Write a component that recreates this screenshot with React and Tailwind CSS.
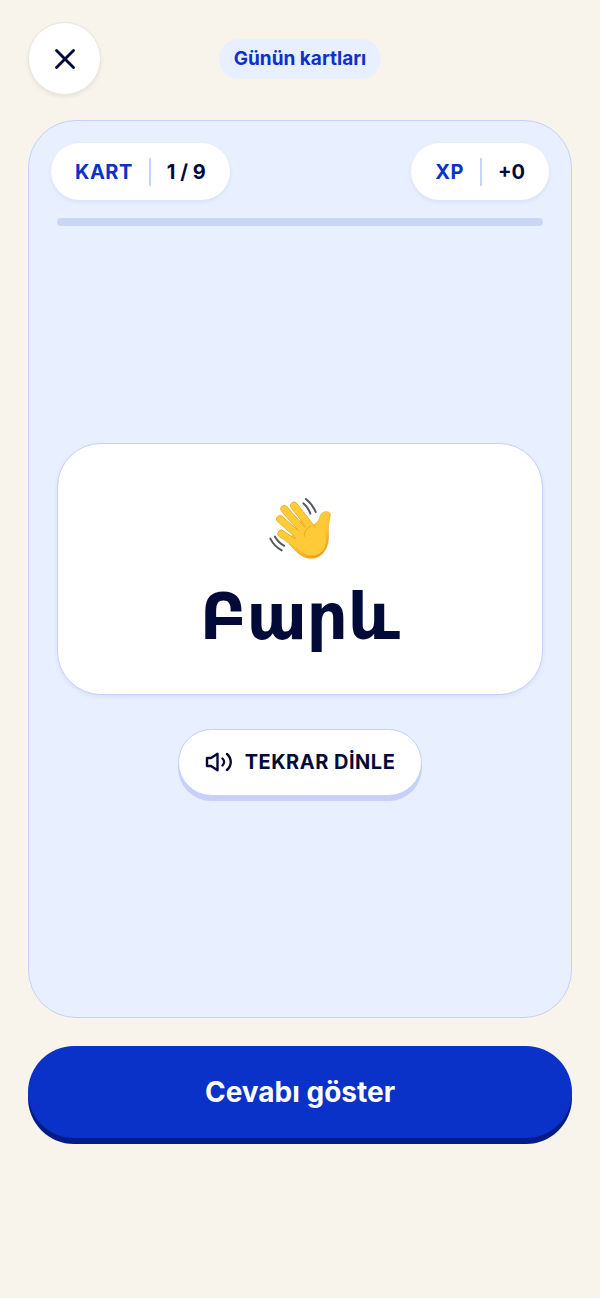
import { X } from 'lucide-react';

const FINGERS = [
  'M132 77 L186 146',
  'M103 87 L166 160',
  'M90 117 L154 174',
  'M94 161 L150 200',
];

const PALM =
  'M152 122 L180 136 C186 137 190 135 195 132 C204 127 207 119 211 107 C216 92 238 92 241 102 C240 116 233 134 235 158 C237 184 232 206 217 221 C204 234 187 237 170 233 C150 228 134 211 118 192 C124 170 134 146 152 122 Z';

const WavingHand = () => (
  <svg className="size-16" viewBox="54 51 192 192" fill="none" strokeLinecap="round" aria-hidden="true">
    <defs>
      <linearGradient id="skin" x1="90" y1="70" x2="190" y2="236" gradientUnits="userSpaceOnUse">
        <stop offset="0" stopColor="#ffd03d" />
        <stop offset="0.7" stopColor="#fdc834" />
        <stop offset="1" stopColor="#ee9c1b" />
      </linearGradient>
    </defs>
    <path d={PALM} fill="url(#skin)" stroke="#eba323" strokeWidth="2" />
    {FINGERS.map((d) => (
      <g key={d}>
        <path d={d} stroke="#e39b20" strokeWidth="23" />
        <path d={d} stroke="#ffcc38" strokeWidth="20" />
      </g>
    ))}
    <path
      d="M148 146 L182 137 C190 143 202 150 216 145 C228 155 231 184 224 203 C214 227 182 233 160 220 C146 212 138 202 132 193 L136 178 L142 162 Z"
      fill="#ffca37"
    />
    <path d="M183 138 C170 143 162 155 163 169" stroke="#eaa829" strokeWidth="3" />
    <path
      d="M160 70 C170 79 177 88 181 101 M168 57 C181 68 191 81 197 96 M61 176 C69 192 80 203 95 211 M75 170 C82 182 91 191 102 197"
      stroke="#555960"
      strokeWidth="6"
    />
  </svg>
);

const SpeakerIcon = () => (
  <svg
    className="h-5 w-7"
    viewBox="0 0 28 20"
    fill="none"
    stroke="currentColor"
    strokeWidth="2.4"
    strokeLinecap="round"
    strokeLinejoin="round"
    aria-hidden="true"
  >
    <path d="M2 6 H6 L12.5 1.8 V18.2 L6 14 H2 Z" />
    <path d="M17.5 6.5 C19.5 8.5 19.5 11.5 17.5 13.5" />
    <path d="M22 2 C27 6.5 27 13.5 22 18" />
  </svg>
);

const StatPill = ({ label, value }) => (
  <div className="flex h-[57px] items-center gap-4 rounded-full bg-white px-6 text-xl font-bold shadow-[0_2px_4px_rgba(20,40,130,0.07)]">
    <span className="tracking-wide text-[#0a32c8]">{label}</span>
    <span className="h-7 w-0.5 bg-[#c7d4fa]" />
    <span className="text-[#020b38]">{value}</span>
  </div>
);

const App = () => {
  return (
    <div className="flex min-h-screen flex-col bg-[#f8f4eb] px-7 pt-[22px] pb-[154px] font-['Inter','DejaVu_Sans',sans-serif] text-[#020b38]">
      <header className="grid grid-cols-[1fr_auto_1fr] items-center">
        <button
          type="button"
          aria-label="Kapat"
          className="flex size-[73px] items-center justify-center rounded-full border border-[#e9e6df] bg-white shadow-[0_2px_4px_rgba(0,0,0,0.07)]"
        >
          <X size={34} strokeWidth={2} />
        </button>
        <h1 className="rounded-full bg-[#e8efff] px-[15px] py-1.5 text-[19px] leading-7 font-bold text-[#0a32c8]">
          Günün kartları
        </h1>
      </header>

      <main className="mt-[25px] flex flex-1 flex-col rounded-[48px] border border-[#c5d0fb] bg-[#e8efff]">
        <div className="flex justify-between px-[22px] pt-[22px]">
          <StatPill label="KART" value="1 / 9" />
          <StatPill label="XP" value="+0" />
        </div>
        <div
          role="progressbar"
          aria-label="Kart"
          aria-valuemin={0}
          aria-valuemax={9}
          aria-valuenow={0}
          className="mx-7 mt-[18px] h-2 rounded-full bg-[#cad6f5]"
        />

        <div className="flex flex-1 flex-col items-center justify-center px-7">
          <section className="flex h-[252px] w-full flex-col items-center rounded-[44px] border border-[#c5d0fb] bg-white pt-[53px] shadow-[0_2px_4px_rgba(20,40,130,0.07)]">
            <WavingHand />
            <p lang="hy" className="mt-3 font-['DejaVu_Sans',sans-serif] text-[64px] leading-[88px] font-bold">
              Բարև
            </p>
          </section>
          <button
            type="button"
            className="mt-[34px] mb-[5px] flex h-[67px] items-center gap-3 rounded-full border border-[#c5d0fb] bg-white px-[26px] text-xl font-bold tracking-wide shadow-[0_5px_0_#c5d0fb]"
          >
            <SpeakerIcon />
            TEKRAR DİNLE
          </button>
        </div>
      </main>

      <button
        type="button"
        className="mt-7 mb-1.5 h-[92px] w-full rounded-full bg-[#0a32c8] text-[28px] font-bold text-white shadow-[0_6px_0_#051c86]"
      >
        Cevabı göster
      </button>
    </div>
  );
};

export default App;
